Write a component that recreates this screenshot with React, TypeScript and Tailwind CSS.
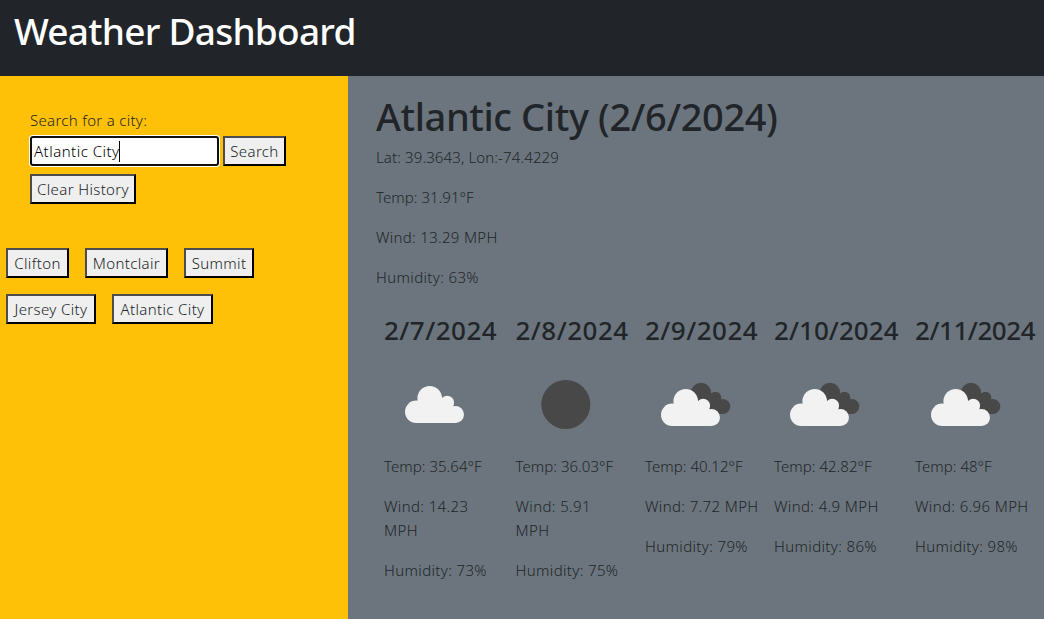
type Day = { date: string; icon: string; temp: string; wind: string; humidity: string; width: string; text: string; spacing: string };

const days: Day[] = [
  { date: "2/7/2024", icon: "cloud", temp: "35.64°F", wind: "14.23 MPH", humidity: "73%", width: "w-[131.5px]", text: "w-[112px]", spacing: "tracking-[0.48px]" },
  { date: "2/8/2024", icon: "night", temp: "36.03°F", wind: "5.91 MPH", humidity: "75%", width: "w-[129.5px]", text: "w-[108px]", spacing: "tracking-[0.48px]" },
  { date: "2/9/2024", icon: "broken", temp: "40.12°F", wind: "7.72 MPH", humidity: "79%", width: "w-[129px]", text: "w-[125px]", spacing: "tracking-[0.48px]" },
  { date: "2/10/2024", icon: "broken", temp: "42.82°F", wind: "4.9 MPH", humidity: "86%", width: "w-[141px]", text: "w-[125px]", spacing: "tracking-[0.05px]" },
  { date: "2/11/2024", icon: "broken", temp: "48°F", wind: "6.96 MPH", humidity: "98%", width: "w-[137px]", text: "w-[125px]", spacing: "tracking-[-0.45px]" },
];

const history = [
  { name: "Clifton", width: "w-[63px]" },
  { name: "Montclair", width: "w-[83px]" },
  { name: "Summit", width: "w-[70px]" },
  { name: "Jersey City", width: "w-[90px]" },
  { name: "Atlantic City", width: "w-[101px]" },
];

function Cloud() {
  return (
    <g fill="#f2f2f2">
      <circle cx="32.2" cy="56.8" r="11.2" />
      <circle cx="45.7" cy="43.3" r="12.3" />
      <circle cx="63.2" cy="47.7" r="6.9" />
      <circle cx="71.5" cy="59.5" r="8.5" />
      <path d="M32 68H71.5L69.5 51L66 45H36L32 52Z" />
    </g>
  );
}

function WeatherIcon({ kind }: { kind: string }) {
  return (
    <svg width="100" height="100" viewBox="0 0 100 100" className="-mb-px block shrink-0">
      {kind === "cloud" && <Cloud />}
      {kind === "night" && <circle cx="49.8" cy="49.5" r="24.5" fill="#484848" />}
      {kind === "broken" && (
        <>
          <g fill="#484848">
            <circle cx="56" cy="38" r="10.2" />
            <circle cx="70.4" cy="42.6" r="5.9" />
            <circle cx="77.8" cy="51.5" r="7.5" />
            <path d="M50 40H72L77 46V59H60Z" />
          </g>
          <g transform="translate(-5 3)">
            <Cloud />
          </g>
        </>
      )}
    </svg>
  );
}

function Button({ label, width }: { label: string; width: string }) {
  return (
    <button
      className={`${width} flex h-[30px] shrink-0 items-center justify-center whitespace-nowrap border-2 border-t-[#4d4d4d] border-l-[#4d4d4d] border-r-black border-b-black bg-[#efefef] leading-6 tracking-[0.36px] text-[#212529]`}
    >
      {label}
    </button>
  );
}

export default function App() {
  return (
    <div className="flex h-[619px] w-[1044px] flex-col overflow-hidden font-['Noto_Sans',sans-serif] text-[15px] leading-6 font-light tracking-[0.36px] text-[#212529]">
      <header className="h-[76px] shrink-0 bg-[#212529] pt-[7px] pl-[14px]">
        <h1 className="text-[37px] leading-[48px] font-medium tracking-[-0.74px] text-white">Weather Dashboard</h1>
      </header>
      <div className="flex min-h-0 flex-1">
        <aside className="w-[348px] shrink-0 bg-[#ffc107] pt-8">
          <div className="pl-[30px]">
            <label className="block h-7 tracking-[0.3px]">Search for a city:</label>
            <div className="flex gap-1">
              <div className="flex h-[30px] w-[189px] items-center rounded-[3px] border-2 border-[#101010] bg-white pl-0.5 text-black shadow-[0_0_0_1px_#ffffff]">
                <span className="-mr-px tracking-[0.48px]">Atlantic City</span>
                <span className="h-[21px] w-px bg-black" />
              </div>
              <Button label="Search" width="w-[63px]" />
            </div>
            <div className="mt-2">
              <Button label="Clear History" width="w-[106px]" />
            </div>
          </div>
          <div className="mt-11 flex w-[300px] flex-wrap gap-4 pl-1.5">
            {history.map((h) => (
              <Button key={h.name} label={h.name} width={h.width} />
            ))}
          </div>
        </aside>
        <main className="flex-1 bg-[#6c757d] pt-[16px] pl-7">
          <h2 className="h-[53px] text-[38px] leading-[48px] font-medium tracking-[-0.39px]">Atlantic City (2/6/2024)</h2>
          <div className="flex flex-col gap-4">
            <p className="tracking-[0.12px]">Lat: 39.3643, Lon:-74.4229</p>
            <p className="tracking-[0.04px]">Temp: 31.91°F</p>
            <p className="tracking-[0.3px]">Wind: 13.29 MPH</p>
            <p>Humidity: 63%</p>
          </div>
          <div className="mt-6 flex pl-2">
            {days.map((d) => (
              <section key={d.date} className={`${d.width} shrink-0`}>
                <h3 className={`${d.spacing} h-[42px] text-[26px] leading-[34px] font-medium whitespace-nowrap`}>{d.date}</h3>
                <WeatherIcon kind={d.icon} />
                <div className={`${d.text} flex flex-col gap-4`}>
                  <p className="tracking-[0.04px]">Temp: {d.temp}</p>
                  <p>Wind: {d.wind}</p>
                  <p>Humidity: {d.humidity}</p>
                </div>
              </section>
            ))}
          </div>
        </main>
      </div>
    </div>
  );
}
